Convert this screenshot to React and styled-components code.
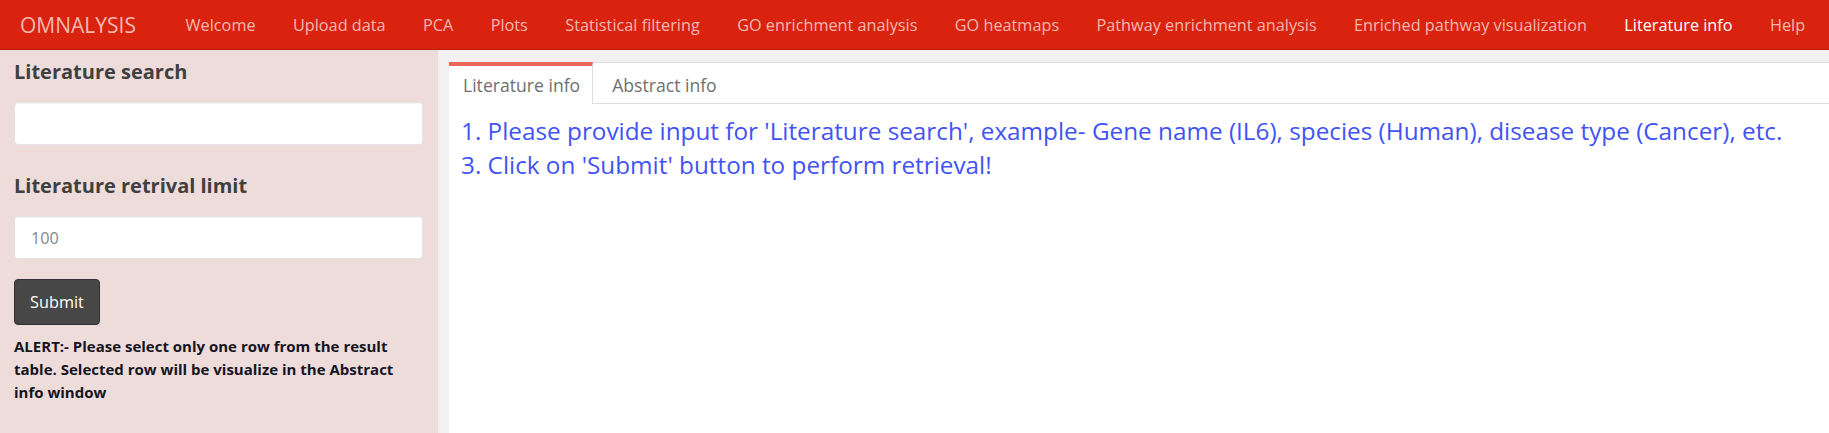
import React from 'react';
import styled, { createGlobalStyle } from 'styled-components';

const GlobalStyle = createGlobalStyle`
    html, body {
        margin: 0;
        padding: 0;
        background: #f1f1f1;
        font-family: "Open Sans", "Liberation Sans", sans-serif;
    }
    * {
        box-sizing: border-box;
    }
`;

const Page = styled.div`
    display: flex;
    flex-direction: column;
    width: 1829px;
    height: 433px;
    overflow: hidden;
`;

const NavBar = styled.nav`
    display: flex;
    align-items: center;
    height: 50px;
    background: #d9230f;
    border-bottom: 1px solid #b81d0b;
    flex-shrink: 0;
`;

const Brand = styled.div`
    color: #f4b8b0;
    font-size: 21px;
    padding: 0 31px 0 20px;
`;

const NavLink = styled.div`
    color: ${props => props.active ? '#ffffff' : '#f4b8b0'};
    font-size: 16.25px;
    padding: 0 18.7px;
    white-space: nowrap;
`;

const Body = styled.div`
    display: flex;
    flex: 1;
`;

const Sidebar = styled.aside`
    width: 438px;
    flex-shrink: 0;
    background: #eedcdb;
    padding: 8px 15px 0 14px;
`;

const Label = styled.div`
    color: #404040;
    font-size: 20px;
    font-weight: 700;
    line-height: 28px;
    margin-bottom: 16px;
`;

const Input = styled.div`
    height: 43px;
    background: #ffffff;
    border: 1px solid #e4e4e4;
    border-radius: 4px;
    box-shadow: inset 0 1px 1px rgba(0, 0, 0, 0.04);
    color: #888888;
    font-size: 16.25px;
    display: flex;
    align-items: center;
    padding: 0 16px;
    margin-bottom: ${props => props.gap || 0}px;
`;

const SubmitButton = styled.button`
    width: 86px;
    height: 46px;
    background: #474747;
    border: 1px solid #333333;
    border-radius: 4px;
    color: #ffffff;
    font-family: "Open Sans", "Liberation Sans", sans-serif;
    font-size: 16.25px;
    padding: 0;
    margin-bottom: 10px;
    display: block;
`;

const Alert = styled.div`
    color: #15151f;
    font-size: 15px;
    font-weight: 700;
    line-height: 23px;
    padding-right: 10px;
`;

const Main = styled.main`
    flex: 1;
    padding: 12px 0 0 11px;
`;

const Panel = styled.section`
    height: 100%;
    background: #ffffff;
    border-top: 1px solid #dddddd;
`;

const Tabs = styled.div`
    display: flex;
    height: 41px;
    border-bottom: 1px solid #dddddd;
`;

const Tab = styled.div`
    display: flex;
    align-items: center;
    padding: ${props => props.active ? '0 12px 0 14px' : '0 14px 0 19px'};
    margin: ${props => props.active ? '-1px 0 -1px 0' : '0'};
    color: #6f6f6f;
    font-size: 17.6px;
    background: ${props => props.active ? '#ffffff' : 'transparent'};
    border-top: 4px solid ${props => props.active ? '#e8665a' : 'transparent'};
    border-right: ${props => props.active ? '1px solid #dddddd' : 'none'};
`;

const Content = styled.div`
    padding: 10px 12px;
    color: #4353f3;
    font-size: 24.3px;
    line-height: 34px;
`;

export default function App() {
    const links = [
        'Welcome', 'Upload data', 'PCA', 'Plots', 'Statistical filtering',
        'GO enrichment analysis', 'GO heatmaps', 'Pathway enrichment analysis',
        'Enriched pathway visualization', 'Literature info', 'Help'
    ];

    return (
        <>
            <GlobalStyle />
            <Page>
                <NavBar>
                    <Brand>OMNALYSIS</Brand>
                    {links.map(link => (
                        <NavLink key={link} active={link === 'Literature info'}>{link}</NavLink>
                    ))}
                </NavBar>
                <Body>
                    <Sidebar>
                        <Label>Literature search</Label>
                        <Input gap={27} />
                        <Label>Literature retrival limit</Label>
                        <Input gap={20}>100</Input>
                        <SubmitButton>Submit</SubmitButton>
                        <Alert>
                            ALERT:- Please select only one row from the result table. Selected row will be visualize in the Abstract info window
                        </Alert>
                    </Sidebar>
                    <Main>
                        <Panel>
                            <Tabs>
                                <Tab active>Literature info</Tab>
                                <Tab>Abstract info</Tab>
                            </Tabs>
                            <Content>
                                <div>1. Please provide input for 'Literature search', example- Gene name (IL6), species (Human), disease type (Cancer), etc.</div>
                                <div>3. Click on 'Submit' button to perform retrieval!</div>
                            </Content>
                        </Panel>
                    </Main>
                </Body>
            </Page>
        </>
    );
}
